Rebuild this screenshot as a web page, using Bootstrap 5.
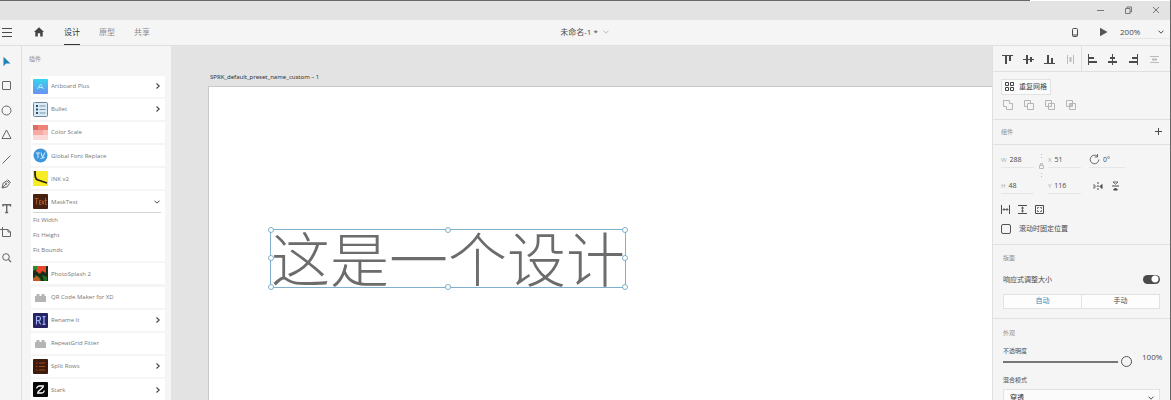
<!DOCTYPE html>
<html lang="zh-CN">
<head>
<meta charset="utf-8">
<meta name="viewport" content="width=device-width, initial-scale=1">
<title>未命名-1</title>
<link href="https://cdn.jsdelivr.net/npm/bootstrap@5.3.0/dist/css/bootstrap.min.css" rel="stylesheet">
<style>
  :root { --ink:#4b4b4b; --soft:#8f8f8f; --line:#e0e0e0; --panel:#f5f5f5; --blue:#2a8dbd; }
  body { font-family:"Open Sans","Noto Sans CJK SC",sans-serif; font-size:7px; line-height:10px; color:var(--ink); background:#e3e3e3; }
  button, input, select { font:inherit; color:inherit; }
  button { background:none; border:0; padding:0; display:inline-flex; align-items:center; justify-content:center; }
  a { color:inherit; text-decoration:none; }
  h2 { font-size:6px; line-height:10px; font-weight:400; color:var(--soft); margin:0; }
  svg { display:block; flex:none; fill:none; stroke:currentColor; }
  .faint { color:#bbb; }
  .over { position:relative; }
  .over > svg { position:absolute; right:5px; top:50%; transform:translateY(-50%); pointer-events:none; }

  /* window frame and top bar */
  .app { border-right:1px solid #666; }
  .edge { height:1px; background:#fff; }
  .edge div { width:88%; background:#6b6669; }
  .titlebar { height:19px; gap:18px; padding-right:9px; color:#777; }
  .topbar { height:26px; background:var(--panel); border-bottom:1px solid var(--line); }
  .side-part { flex:1 1 0; }
  .modes { gap:19px; margin-left:19px; }
  .mode { font-size:8px; line-height:24px; height:25px; color:#8a8a8a; }
  .mode.active { color:#333; border-bottom:1px solid #333; }
  .doc-name { font-size:8px; gap:4px; }
  .zoombox { width:50px; border:0; border-bottom:1px solid #e6e6e6; background:none; appearance:none; font-size:8px; line-height:12px; padding:0; }

  /* tool strip */
  .toolbar { width:22px; background:var(--panel); border-right:1px solid var(--line); color:#666; }
  .tools { height:209px; margin-top:9px; }
  .tools button { height:13px; width:13px; }

  /* plugin list */
  .plugins { width:149px; background:var(--panel); padding:8px 6px 0 7px; }
  .plugins h2 { margin-bottom:12px; }
  .plug-list { margin-left:2px; }
  .plug { background:#fff; border-radius:1px; color:#777; font-size:6px; }
  .plug-head { height:21px; padding:0 4px 0 2px; gap:3px; width:100%; }
  .plug-head svg:last-child { color:#444; }
  .sub { height:49px; border-top:1px solid #d6d6d6; margin:0 4px 0 2px; }
  .sub button { line-height:15px; }

  /* canvas */
  .work { padding-left:37px; }
  .board-name { font-family:"Noto Sans",sans-serif; font-size:6px; line-height:10px; color:#333; padding:26px 0 4px 2px; }
  .board { background:#fff; border:solid #c9c9c9; border-width:1px 0 0 1px; }
  .picked { position:absolute; left:61px; top:142px; border:1px solid #7fb0cd; padding-bottom:4px; font:300 59px/53px "Noto Sans CJK SC",sans-serif; color:#6c6c6c; white-space:nowrap; }
  .grip { position:absolute; width:6px; height:6px; border:1px solid #7fb0cd; border-radius:50%; background:#fff; transform:translate(-50%,-50%); }

  /* properties */
  .props { width:178px; background:var(--panel); border-left:1px solid var(--line); }
  .props section { border-bottom:1px solid var(--line); }
  .align { height:26px; padding-left:4px; }
  .align button, .bools button { width:21px; height:100%; }
  .align button { padding-top:3px; }
  .align .split { border-left:1px solid var(--line); }
  .repeat-btn { height:16px; width:50px; background:#fbfbfb; border:1px solid #e2e2e2; gap:5px; color:#444; }
  .shape-ops { padding:7px 0 8px; }
  .bools { height:12px; padding-left:4px; color:#b5b5b5; }
  .part-head { padding:7px 8px; }
  .field { border-bottom:1px solid #e6e6e6; height:15px; color:#aaa; font-size:6px; gap:3px; }
  .field input { border:0; background:none; padding:0; width:22px; color:var(--ink); font-size:7px; line-height:10px; height:10px; }
  .frame-box { padding:8px 8px 10px; }
  .geo { display:grid; grid-template-columns:33px 14px 33px 8px 36px; }
  .geo-low { margin-top:-6px; }
  .sizes { margin:11px 0 10px; }
  .pin { appearance:none; width:10px; height:10px; border:1px solid #555; border-radius:2px; margin:0; }
  .pin:checked { background:#555; }
  .resize { padding:8px 10px 9px; }
  .rz { margin:12px 0 9px; }
  .flip { appearance:none; width:17px; height:9px; margin:0; border-radius:5px; background:radial-gradient(circle at 12px 4px,#fff 3px,#4b4b4b 4px); }
  .choice { height:15px; border:1px solid #e2e2e2; background:#fdfdfd; }
  .choice button { flex:1; }
  .choice button + button { border-left:1px solid #e2e2e2; }
  .choice .on { color:var(--blue); }
  .looks { padding:9px 10px 0; }
  .tiny { font-size:6px; }
  .op { margin:8px 0 7px; gap:10px; }
  .op output { font-size:8px; }
  .fade-range { appearance:none; flex:1; min-width:0; height:12px; margin:0; background:linear-gradient(#777,#777) 0 5px/100% 2px no-repeat; }
  .fade-range::-webkit-slider-thumb { appearance:none; width:11px; height:11px; border:1px solid #555; border-radius:50%; background:var(--panel); box-shadow:-3px 0 0 0 var(--panel); }
  .blend-name { margin-bottom:4px; }
  .blend { appearance:none; width:100%; height:18px; border:1px solid #e2e2e2; background:#fbfbfb; padding:0 6px; font-size:7px; color:#333; }
</style>
</head>
<body>
<svg width="0" height="0" class="position-absolute" aria-hidden="true">
  <symbol id="right" viewBox="0 0 6 8"><path d="M1.5 1.5 4.2 4 1.5 6.5" stroke-width="1.1"/></symbol>
  <symbol id="down" viewBox="0 0 8 6"><path d="M1.5 1.7 4 4.2 6.5 1.7"/></symbol>
  <symbol id="block" viewBox="0 0 15 15"><path d="M2 6h11v6H2zM3.5 4h3v2h-3zM8.5 4h3v2h-3z" fill="#b5b5b5" stroke="none"/></symbol>
</svg>
<div class="app vh-100 d-flex flex-column overflow-hidden">
  <div class="edge d-flex"><div></div></div>
  <div class="titlebar d-flex align-items-center justify-content-end">
    <button aria-label="最小化"><svg width="10" height="10"><path d="M2 5.5h7"/></svg></button>
    <button aria-label="还原"><svg width="10" height="10"><path d="M2.500 3.500h4.500v5h-4.500zM4 3.500v-1.500h4.500v5H7"/></svg></button>
    <button aria-label="关闭"><svg width="10" height="10"><path d="m2 2 6 6M8 2 2 8"/></svg></button>
  </div>

  <header class="topbar d-flex align-items-center">
    <div class="side-part d-flex align-items-center">
      <button aria-label="菜单"><svg width="13" height="11"><path d="M2 1.500h10M2 5.500h10M2 9.500h10"/></svg></button>
      <a href="#" aria-label="主页" class="ms-3 ps-1"><svg width="12" height="12"><path d="M6 1.300 11 6H9.700v4.500H7.200V7.300H4.800v3.200H2.300V6H1Z" fill="#444" stroke="none"/></svg></a>
      <nav class="modes d-flex">
        <a href="#" class="mode active">设计</a>
        <a href="#" class="mode">原型</a>
        <a href="#" class="mode">共享</a>
      </nav>
    </div>
    <button class="doc-name"><span>未命名-1 *</span><svg width="8" height="6" class="faint"><use href="#down"/></svg></button>
    <div class="side-part d-flex align-items-center justify-content-end">
      <button aria-label="设备预览"><svg width="8" height="11"><rect x="1.500" y="1.500" width="5" height="8" rx="1"/><path d="M2 8h4"/></svg></button>
      <button aria-label="播放" class="ms-3 ps-1 me-2 pe-1"><svg width="9" height="10"><path d="M1 .8 8.500 5 1 9.200Z" fill="#555" stroke="none"/></svg></button>
      <div class="over"><select class="zoombox" aria-label="缩放"><option>200%</option></select><svg width="8" height="6"><use href="#down"/></svg></div>
    </div>
  </header>

  <div class="d-flex flex-grow-1 overflow-hidden">
    <aside class="toolbar flex-shrink-0">
      <div class="tools d-flex flex-column justify-content-between">
        <button aria-label="选择"><svg width="13" height="13"><path d="M3.500 1.800v9.500l2.500-2.700 4.500-.2Z" fill="#1d83b8" stroke="none"/></svg></button>
        <button aria-label="矩形"><svg width="13" height="13"><rect x="2.500" y="2.500" width="8" height="8" rx=".5"/></svg></button>
        <button aria-label="椭圆"><svg width="13" height="13"><circle cx="6.500" cy="6.500" r="4.500"/></svg></button>
        <button aria-label="多边形"><svg width="13" height="13"><path d="M6.500 2 11 10.500H2Z"/></svg></button>
        <button aria-label="直线"><svg width="13" height="13"><path d="m2.500 10.500 8-8"/></svg></button>
        <button aria-label="钢笔"><svg width="13" height="13"><path d="m2 11 1.200-5L7 3.800 9.500 6.500 7.200 9.800ZM2 11l3.800-3.800M7.500 2.500l3.200 3.200"/><circle cx="6.200" cy="6.800" r=".7"/></svg></button>
        <button aria-label="文本"><svg width="13" height="13"><path d="M3 4.500V2.700h7.500v1.800M6.700 2.700v8M5.200 10.500h3" stroke-width="1.400"/></svg></button>
        <button aria-label="画板"><svg width="13" height="13"><path d="M2.500 1v9.500h8V6L8 3.500H0M8 3.500V6h2.500"/></svg></button>
        <button aria-label="缩放工具"><svg width="13" height="13"><circle cx="6" cy="6" r="3.300"/><path d="m8.400 8.400 2.600 2.600" stroke-width="1.300"/></svg></button>
      </div>
    </aside>

    <aside class="plugins flex-shrink-0 d-flex flex-column">
      <h2>插件</h2>
      <div class="plug-list flex-grow-1 d-flex flex-column justify-content-between">
        <div class="plug"><button class="plug-head"><svg width="15" height="15"><defs><linearGradient id="sky" x2="0" y2="1"><stop stop-color="#35d5ed"/><stop offset="1" stop-color="#6a91f0"/></linearGradient></defs><rect width="15" height="15" rx="1" fill="url(#sky)" stroke="none"/><path d="m4.500 10 3-5 3 5M5.500 8.500h4" stroke="#a9e7ff"/></svg><span class="me-auto">Artboard Plus</span><svg width="6" height="8"><use href="#right"/></svg></button></div>
        <div class="plug"><button class="plug-head"><svg width="15" height="15"><rect x=".5" y=".5" width="14" height="14" rx="1" fill="#d9ecf5" stroke="#6f8798"/><path d="M6.500 4h6M6.500 7.500h6M6.500 11h6" stroke="#7793a5"/><path d="M3 4h2M3 7.500h2M3 11h2" stroke="#294b70" stroke-width="2"/></svg><span class="me-auto">Bullet</span><svg width="6" height="8"><use href="#right"/></svg></button></div>
        <div class="plug"><button class="plug-head"><svg width="15" height="15"><g stroke="none"><path d="M0 0h15v5H0z" fill="#ef8278"/><path d="M0 5h15v5H0z" fill="#f6aaa3"/><path d="M0 10h15v5H0z" fill="#fbd9d6"/><path d="M0 0h5v5H0z" fill="#dc6c62"/><path d="M10 5h5v5h-5z" fill="#f9c0ba"/></g></svg><span class="me-auto">Color Scale</span></button></div>
        <div class="plug"><button class="plug-head"><svg width="15" height="15"><circle cx="7.500" cy="7.500" r="7" fill="#3d97de" stroke="none"/><path d="M3 5h4M5 5v5M8 4.500l1.500 5 2.500-5M7.500 10.500l4-1" stroke="#d8f0ff"/></svg><span class="me-auto">Global Font Replace</span></button></div>
        <div class="plug"><button class="plug-head"><svg width="15" height="15"><path d="M0 0h15v15H0z" fill="#f7ec25" stroke="none"/><path d="M2 0c0 5 0 8 3 9l9 3" stroke="#27230c" stroke-width="1.800"/></svg><span class="me-auto">INK v2</span></button></div>
        <div class="plug"><button class="plug-head"><svg width="15" height="15"><rect width="15" height="15" rx="1" fill="#48200f" stroke="none"/><path d="M1.500 4.500h4M3.500 4.500v6M8.500 8.500h-2v2h2M6.500 8.500v-2h2M9 6.500l2 4M11 6.500l-2 4M12.500 4v6.500H14M11.500 6.500H14" stroke="#b5602b" stroke-width=".8"/></svg><span class="me-auto">MaskText</span><svg width="8" height="6"><use href="#down"/></svg></button>
          <div class="sub d-flex flex-column align-items-start"><button>Fit Width</button><button>Fit Height</button><button>Fit Bounds</button></div></div>
        <div class="plug"><button class="plug-head"><svg width="15" height="15"><g stroke="none"><path d="M0 0h15v15H0z" fill="#1b2c16"/><path d="M4 0h9v7l-4-2-2 3-4-3z" fill="#e9472a"/><path d="M0 0h4v3L0 5zM2 9l4 2 2 3-4 1z" fill="#268c2c"/><path d="M0 12l4-2 4 5H0z" fill="#c25a22"/><path d="M9 9l5 2v4h-3z" fill="#236d20"/></g></svg><span class="me-auto">PhotoSplash 2</span></button></div>
        <div class="plug"><button class="plug-head"><svg width="15" height="15"><use href="#block"/></svg><span class="me-auto">QR Code Maker for XD</span></button></div>
        <div class="plug"><button class="plug-head"><svg width="15" height="15"><rect width="15" height="15" rx="1" fill="#282363" stroke="none"/><path d="M3.500 11.500v-8h2.300q1.700 0 1.700 2T5.800 7.500H3.500M5.500 7.500l2.200 4M9.500 3.700h3M9.500 11.300h3M11 3.700v7.600" stroke="#9db4f4" stroke-width="1.200"/></svg><span class="me-auto">Rename It</span><svg width="6" height="8"><use href="#right"/></svg></button></div>
        <div class="plug"><button class="plug-head"><svg width="15" height="15"><use href="#block"/></svg><span class="me-auto">RepeatGrid Fitter</span></button></div>
        <div class="plug"><button class="plug-head"><svg width="15" height="15"><rect width="15" height="15" rx="1" fill="#3d1b0d" stroke="none"/><path d="M6 4h6M6 7.500h6M6 11h6M3 4h1.500M3 7.500h1.500M3 11h1.500" stroke="#a3481d" stroke-width="1.200"/></svg><span class="me-auto">Split Rows</span><svg width="6" height="8"><use href="#right"/></svg></button></div>
        <div class="plug"><button class="plug-head"><svg width="15" height="15"><rect width="15" height="15" rx="1" fill="#080808" stroke="none"/><path d="M11 4H6.500Q3.500 4.500 4 6.500M4 11h4.500Q11.500 10.500 11 8.500M4.800 10 10.300 5" stroke="#fff" stroke-width="1.300"/></svg><span class="me-auto">Stark</span><svg width="6" height="8"><use href="#right"/></svg></button></div>
      </div>
    </aside>

    <main class="work flex-grow-1 d-flex flex-column overflow-hidden">
      <div class="board-name">SPRK_default_preset_name_custom – 1</div>
      <div class="board flex-grow-1 position-relative">
        <div class="picked">这是一个设计
          <i class="grip start-0 top-0"></i><i class="grip start-50 top-0"></i><i class="grip start-100 top-0"></i>
          <i class="grip start-0 top-50"></i><i class="grip start-100 top-50"></i>
          <i class="grip start-0 top-100"></i><i class="grip start-50 top-100"></i><i class="grip start-100 top-100"></i>
        </div>
      </div>
    </main>

    <aside class="props flex-shrink-0">
      <section class="align d-flex">
        <button aria-label="顶对齐"><svg width="11" height="11"><path d="M0 1.500h11"/><path d="M4 2v8M8 2v5" stroke-width="2"/></svg></button>
        <button aria-label="垂直居中"><svg width="11" height="11"><path d="M0 5.500h11"/><path d="M4 1v9M8 3v5" stroke-width="2"/></svg></button>
        <button aria-label="底对齐"><svg width="11" height="11"><path d="M0 9.500h11"/><path d="M4 1v8M8 4v5" stroke-width="2"/></svg></button>
        <button class="faint" aria-label="水平分布"><svg width="11" height="11"><path d="M2.500 1v9M8.500 1v9"/><path d="M5.500 3v5" stroke-width="2"/></svg></button>
        <button class="split" aria-label="左对齐"><svg width="11" height="11"><path d="M1.500 0v11"/><path d="M2 4h5M2 8h8" stroke-width="2"/></svg></button>
        <button aria-label="水平居中"><svg width="11" height="11"><path d="M5.500 0v11"/><path d="M3 4h5M1 8h9" stroke-width="2"/></svg></button>
        <button aria-label="右对齐"><svg width="11" height="11"><path d="M9.500 0v11"/><path d="M4 4h5M1 8h8" stroke-width="2"/></svg></button>
        <button class="faint" aria-label="垂直分布"><svg width="11" height="11"><path d="M1 2.500h9M1 8.500h9"/><path d="M3 5.500h5" stroke-width="2"/></svg></button>
      </section>
      <section class="shape-ops">
        <div class="px-2 mb-1"><button class="repeat-btn"><svg width="9" height="9"><path d="M.5.500h3v3h-3zM5.500.500h3v3h-3zM.5 5.500h3v3h-3zM5.500 5.500h3v3h-3z"/></svg>重复网格</button></div>
        <div class="bools d-flex">
          <button aria-label="添加"><svg width="10" height="10"><path d="M.5.500h6v3h3v6h-6v-3h-3z"/></svg></button>
          <button aria-label="减去"><svg width="10" height="10"><path d="M3.500 6.500h-3v-6h6v3M3.500 3.500h6v6h-6z"/></svg></button>
          <button aria-label="交叉"><svg width="10" height="10"><path d="M.5.500h6v6h-6zM3.500 3.500h6v6h-6z"/></svg></button>
          <button aria-label="排除重叠"><svg width="10" height="10"><path d="M.5.500h6v6h-6zM3.500 3.500h6v6h-6zM5 4v2M4 5h2"/></svg></button>
        </div>
      </section>
      <section class="part-head d-flex align-items-center justify-content-between">
        <h2>组件</h2>
        <button aria-label="添加组件"><svg width="7" height="7"><path d="M3.500 0v7M0 3.500h7"/></svg></button>
      </section>
      <section class="frame-box">
        <div class="geo">
          <label class="field d-flex align-items-center">W<input value="288"></label>
          <svg width="14" height="32" class="faint"><path d="M7.500 1v6M7.500 20v6" stroke-dasharray="1 2"/><path d="M5.500 12.500h4v3h-4zM6.500 12.500v-2h2v2"/></svg>
          <label class="field d-flex align-items-center">X<input value="51"></label>
          <span></span>
          <label class="field d-flex align-items-center"><svg width="11" height="11" stroke="#666"><path d="M8.300 2.200A4.300 4.300 0 1 0 9.800 5.500M8.500 0v3H5.800" stroke="#666"/></svg><input value="0°" aria-label="旋转"></label>
        </div>
        <div class="geo geo-low">
          <label class="field d-flex align-items-center">H<input value="48"></label><span></span>
          <label class="field d-flex align-items-center">Y<input value="116"></label><span></span>
          <div class="d-flex gap-2 ps-1">
            <button aria-label="水平翻转"><svg width="10" height="9"><path d="M5 0v9" stroke-dasharray="2 1"/><path d="M1 2.500 3 4.500 1 6.500Z" stroke-width=".8"/><path d="M9 2.500 7 4.500l2 2Z" fill="currentColor"/></svg></button>
            <button aria-label="垂直翻转"><svg width="9" height="10"><path d="M1 5h7"/><path d="M2 1h5L4.500 3.200Z" stroke-width=".8"/><path d="M2.500 9h4l-2-2Z" fill="currentColor"/></svg></button>
          </div>
        </div>
        <div class="sizes d-flex gap-2">
          <button aria-label="固定宽度"><svg width="9" height="9"><path d="M.5 0v9M8.500 0v9"/><path d="M1.500 4.500h6M3 3v3M6 3v3" stroke-width=".8"/></svg></button>
          <button aria-label="固定高度"><svg width="9" height="9"><path d="M0 .5h9M0 8.500h9"/><path d="M4.500 1.500v6M3 3h3M3 6h3" stroke-width=".8"/></svg></button>
          <button aria-label="自动尺寸"><svg width="9" height="9"><path d="M.5.500h8v8h-8z"/><path d="M2.500 4V2.500H4M5 2.500h1.500V4M6.500 5v1.500H5M4 6.500H2.500V5" stroke-width=".7"/></svg></button>
        </div>
        <label class="d-flex align-items-center gap-2"><input type="checkbox" class="pin"><span>滚动时固定位置</span></label>
      </section>
      <section class="resize">
        <h2>版面</h2>
        <label class="rz d-flex align-items-center justify-content-between"><span>响应式调整大小</span><input type="checkbox" role="switch" class="flip" checked></label>
        <div class="choice d-flex"><button class="on">自动</button><button>手动</button></div>
      </section>
      <section class="looks border-0">
        <h2>外观</h2>
        <div class="op d-flex align-items-center">
          <div class="flex-grow-1"><label for="op" class="d-block tiny">不透明度</label><div class="d-flex"><input id="op" type="range" class="fade-range" value="100"></div></div>
          <output for="op">100%</output>
        </div>
        <label for="blend" class="blend-name d-block tiny">混合模式</label>
        <div class="over"><select id="blend" class="blend"><option>穿透</option></select><svg width="8" height="6"><use href="#down"/></svg></div>
      </section>
    </aside>
  </div>
</div>
<script src="https://cdn.jsdelivr.net/npm/bootstrap@5.3.0/dist/js/bootstrap.bundle.min.js"></script>
</body>
</html>
